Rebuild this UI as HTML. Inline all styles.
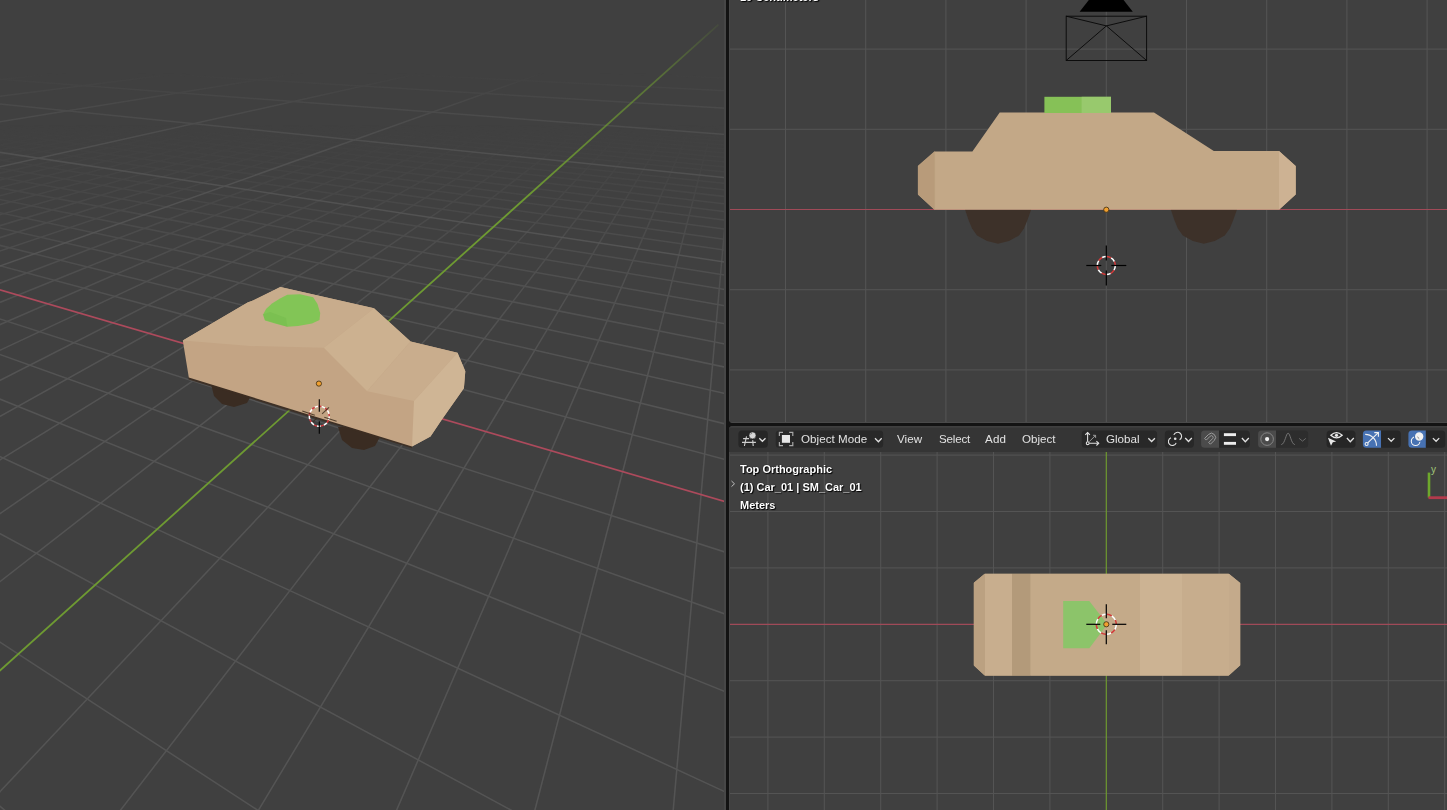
<!DOCTYPE html>
<html><head><meta charset="utf-8"><style>
html,body{margin:0;padding:0;}
body{width:1447px;height:810px;overflow:hidden;position:relative;background:#131313;font-family:"Liberation Sans",sans-serif;}
.pane{position:absolute;overflow:hidden;}
.txt{position:absolute;will-change:transform;color:#e2e2e2;font-size:11.6px;line-height:14px;white-space:nowrap;}
.ov{position:absolute;will-change:transform;color:#fff;font-weight:bold;font-size:11px;line-height:12px;white-space:nowrap;text-shadow:0 0 1px #000,1px 1px 1px #000;}
</style></head><body>
<div class="pane" style="left:0;top:0;width:726px;height:810px;"><svg width="726" height="810" style="position:absolute;left:0;top:0">
<defs>
 <linearGradient id="fade1" x1="0" y1="0" x2="0" y2="810" gradientUnits="userSpaceOnUse">
  <stop offset="0.154" stop-color="#fff" stop-opacity="0"/>
  <stop offset="0.198" stop-color="#fff" stop-opacity="0.14"/>
  <stop offset="0.235" stop-color="#fff" stop-opacity="0.33"/>
  <stop offset="0.284" stop-color="#fff" stop-opacity="0.58"/>
  <stop offset="0.358" stop-color="#fff" stop-opacity="0.82"/>
  <stop offset="0.47" stop-color="#fff" stop-opacity="1"/>
 </linearGradient>
 <linearGradient id="fade10" x1="0" y1="0" x2="0" y2="810" gradientUnits="userSpaceOnUse">
  <stop offset="0.09" stop-color="#fff" stop-opacity="0"/>
  <stop offset="0.13" stop-color="#fff" stop-opacity="0.45"/>
  <stop offset="0.19" stop-color="#fff" stop-opacity="0.75"/>
  <stop offset="0.3" stop-color="#fff" stop-opacity="0.9"/>
  <stop offset="0.45" stop-color="#fff" stop-opacity="1"/>
 </linearGradient>
 <linearGradient id="fadeax" x1="0" y1="0" x2="0" y2="810" gradientUnits="userSpaceOnUse">
  <stop offset="0.02" stop-color="#fff" stop-opacity="0.05"/>
  <stop offset="0.06" stop-color="#fff" stop-opacity="0.3"/>
  <stop offset="0.10" stop-color="#fff" stop-opacity="0.55"/>
  <stop offset="0.25" stop-color="#fff" stop-opacity="1"/>
 </linearGradient>
 <mask id="max" maskUnits="userSpaceOnUse" x="0" y="0" width="726" height="810"><rect width="726" height="810" fill="url(#fadeax)"/></mask>
 <mask id="m1" maskUnits="userSpaceOnUse" x="0" y="0" width="726" height="810"><rect width="726" height="810" fill="url(#fade1)"/></mask>
 <mask id="m10" maskUnits="userSpaceOnUse" x="0" y="0" width="726" height="810"><rect width="726" height="810" fill="url(#fade10)"/></mask>
</defs>
<rect width="726" height="810" fill="#404040"/>
<g stroke="#545454" stroke-width="1.5" mask="url(#m1)"><line x1="-32098.1" y1="2609.2" x2="161.8" y2="47.3"/><line x1="-31663.1" y1="2608.3" x2="166.9" y2="47.5"/><line x1="-31228.2" y1="2607.5" x2="172.1" y2="47.7"/><line x1="-30793.3" y1="2606.6" x2="177.3" y2="47.9"/><line x1="-30358.4" y1="2605.7" x2="182.6" y2="48.1"/><line x1="-29923.5" y1="2604.8" x2="187.9" y2="48.3"/><line x1="-29488.6" y1="2604.0" x2="193.3" y2="48.5"/><line x1="-29053.7" y1="2603.1" x2="198.7" y2="48.7"/><line x1="-28618.8" y1="2602.2" x2="204.2" y2="48.9"/><line x1="-27749.0" y1="2600.5" x2="215.2" y2="49.3"/><line x1="-27314.1" y1="2599.6" x2="220.9" y2="49.5"/><line x1="-26879.2" y1="2598.7" x2="226.5" y2="49.7"/><line x1="-26444.3" y1="2597.8" x2="232.3" y2="50.0"/><line x1="-26009.3" y1="2597.0" x2="238.1" y2="50.2"/><line x1="-25574.4" y1="2596.1" x2="243.9" y2="50.4"/><line x1="-25139.5" y1="2595.2" x2="249.8" y2="50.6"/><line x1="-24704.6" y1="2594.4" x2="255.8" y2="50.8"/><line x1="-24269.7" y1="2593.5" x2="261.8" y2="51.1"/><line x1="-23399.9" y1="2591.7" x2="274.0" y2="51.5"/><line x1="-22965.0" y1="2590.9" x2="280.2" y2="51.8"/><line x1="-22530.1" y1="2590.0" x2="286.4" y2="52.0"/><line x1="-22095.2" y1="2589.1" x2="292.7" y2="52.2"/><line x1="-21660.3" y1="2588.2" x2="299.1" y2="52.5"/><line x1="-21225.4" y1="2587.4" x2="305.6" y2="52.7"/><line x1="-20790.5" y1="2586.5" x2="312.1" y2="53.0"/><line x1="-20355.5" y1="2585.6" x2="318.7" y2="53.2"/><line x1="-19920.6" y1="2584.7" x2="325.3" y2="53.5"/><line x1="-19050.8" y1="2583.0" x2="338.8" y2="54.0"/><line x1="-18615.9" y1="2582.1" x2="345.6" y2="54.2"/><line x1="-18181.0" y1="2581.2" x2="352.6" y2="54.5"/><line x1="-17746.1" y1="2580.4" x2="359.6" y2="54.7"/><line x1="-17311.2" y1="2579.5" x2="366.6" y2="55.0"/><line x1="-16876.3" y1="2578.6" x2="373.8" y2="55.3"/><line x1="-16441.4" y1="2577.8" x2="381.0" y2="55.5"/><line x1="-16006.5" y1="2576.9" x2="388.3" y2="55.8"/><line x1="-15571.6" y1="2576.0" x2="395.7" y2="56.1"/><line x1="-14701.7" y1="2574.3" x2="410.7" y2="56.7"/><line x1="-14266.8" y1="2573.4" x2="418.3" y2="56.9"/><line x1="-13831.9" y1="2572.5" x2="426.0" y2="57.2"/><line x1="-13397.0" y1="2571.6" x2="433.8" y2="57.5"/><line x1="-12962.1" y1="2570.8" x2="441.7" y2="57.8"/><line x1="-12527.2" y1="2569.9" x2="449.6" y2="58.1"/><line x1="-12092.3" y1="2569.0" x2="457.7" y2="58.4"/><line x1="-11657.4" y1="2568.1" x2="465.9" y2="58.7"/><line x1="-11222.5" y1="2567.3" x2="474.1" y2="59.0"/><line x1="-10352.7" y1="2565.5" x2="490.9" y2="59.7"/><line x1="-9917.8" y1="2564.7" x2="499.4" y2="60.0"/><line x1="-9482.9" y1="2563.8" x2="508.0" y2="60.3"/><line x1="-9047.9" y1="2562.9" x2="516.8" y2="60.6"/><line x1="-8613.0" y1="2562.0" x2="525.6" y2="61.0"/><line x1="-8178.1" y1="2561.2" x2="534.5" y2="61.3"/><line x1="-7743.2" y1="2560.3" x2="543.6" y2="61.7"/><line x1="-7308.3" y1="2559.4" x2="552.7" y2="62.0"/><line x1="-6873.4" y1="2558.5" x2="562.0" y2="62.3"/><line x1="-6003.6" y1="2556.8" x2="580.9" y2="63.1"/><line x1="-903.7" y1="130.3" x2="527.7" y2="2543.7"/><line x1="-5568.7" y1="2555.9" x2="590.5" y2="63.4"/><line x1="-866.9" y1="127.4" x2="1321.7" y2="2542.1"/><line x1="-5133.8" y1="2555.0" x2="600.2" y2="63.8"/><line x1="-831.7" y1="124.6" x2="2115.8" y2="2540.5"/><line x1="-4698.9" y1="2554.2" x2="610.1" y2="64.1"/><line x1="-798.1" y1="122.0" x2="2909.9" y2="2538.9"/><line x1="-4264.0" y1="2553.3" x2="620.0" y2="64.5"/><line x1="-765.8" y1="119.4" x2="3703.9" y2="2537.3"/><line x1="-3829.1" y1="2552.4" x2="630.2" y2="64.9"/><line x1="-734.8" y1="117.0" x2="4498.0" y2="2535.7"/><line x1="-3394.1" y1="2551.5" x2="640.4" y2="65.3"/><line x1="-705.1" y1="114.7" x2="5292.0" y2="2534.1"/><line x1="-2959.2" y1="2550.7" x2="650.7" y2="65.7"/><line x1="-676.6" y1="112.4" x2="6086.1" y2="2532.5"/><line x1="-2524.3" y1="2549.8" x2="661.2" y2="66.1"/><line x1="-649.2" y1="110.3" x2="6880.2" y2="2530.9"/><line x1="-1654.5" y1="2548.1" x2="682.6" y2="66.9"/><line x1="-597.4" y1="106.2" x2="8468.3" y2="2527.7"/><line x1="-1219.6" y1="2547.2" x2="693.6" y2="67.3"/><line x1="-572.9" y1="104.3" x2="9262.3" y2="2526.1"/><line x1="-784.7" y1="2546.3" x2="704.6" y2="67.7"/><line x1="-549.3" y1="102.5" x2="10056.4" y2="2524.5"/><line x1="-349.8" y1="2545.4" x2="715.8" y2="68.1"/><line x1="-526.5" y1="100.7" x2="10850.5" y2="2522.9"/><line x1="85.1" y1="2544.6" x2="727.2" y2="68.5"/><line x1="-504.5" y1="99.0" x2="11644.5" y2="2521.3"/><line x1="520.0" y1="2543.7" x2="738.7" y2="69.0"/><line x1="-483.2" y1="97.3" x2="12438.6" y2="2519.7"/><line x1="-462.7" y1="95.7" x2="13232.6" y2="2518.2"/><line x1="-442.9" y1="94.1" x2="14026.7" y2="2516.6"/><line x1="-423.6" y1="92.6" x2="14820.8" y2="2515.0"/><line x1="-387.0" y1="89.7" x2="16408.9" y2="2511.8"/><line x1="-369.6" y1="88.4" x2="17202.9" y2="2510.2"/><line x1="-352.6" y1="87.0" x2="17997.0" y2="2508.6"/><line x1="-336.2" y1="85.8" x2="18791.1" y2="2507.0"/><line x1="-320.3" y1="84.5" x2="19585.1" y2="2505.4"/><line x1="-304.8" y1="83.3" x2="20379.2" y2="2503.8"/><line x1="-289.7" y1="82.1" x2="21173.3" y2="2502.2"/><line x1="-275.1" y1="81.0" x2="21967.3" y2="2500.6"/><line x1="-260.9" y1="79.9" x2="22761.4" y2="2499.0"/><line x1="-233.7" y1="77.7" x2="24349.5" y2="2495.8"/><line x1="-220.6" y1="76.7" x2="25143.6" y2="2494.2"/><line x1="-207.9" y1="75.7" x2="25937.6" y2="2492.6"/><line x1="-195.5" y1="74.7" x2="26731.7" y2="2491.0"/><line x1="-183.4" y1="73.8" x2="27525.7" y2="2489.4"/><line x1="-171.6" y1="72.9" x2="28319.8" y2="2487.9"/><line x1="-160.1" y1="72.0" x2="19905.5" y2="1726.8"/><line x1="-148.9" y1="71.1" x2="15262.3" y2="1308.6"/><line x1="-138.0" y1="70.2" x2="12430.4" y2="1053.5"/><line x1="-116.9" y1="68.6" x2="9151.0" y2="758.2"/><line x1="-106.8" y1="67.8" x2="8116.6" y2="665.0"/><line x1="-96.9" y1="67.0" x2="7308.8" y2="592.2"/><line x1="-87.2" y1="66.2" x2="6660.6" y2="533.9"/><line x1="-77.7" y1="65.5" x2="6128.9" y2="486.0"/><line x1="-68.4" y1="64.8" x2="5684.9" y2="446.0"/><line x1="-59.4" y1="64.1" x2="5308.6" y2="412.1"/><line x1="-50.5" y1="63.4" x2="4985.5" y2="383.0"/><line x1="-41.9" y1="62.7" x2="4705.1" y2="357.7"/><line x1="-25.1" y1="61.4" x2="4242.7" y2="316.1"/><line x1="-17.0" y1="60.7" x2="4049.7" y2="298.7"/><line x1="-9.0" y1="60.1" x2="3876.9" y2="283.1"/><line x1="-1.2" y1="59.5" x2="3721.3" y2="269.1"/><line x1="6.4" y1="58.9" x2="3580.4" y2="256.4"/><line x1="13.9" y1="58.3" x2="3452.2" y2="244.9"/><line x1="21.2" y1="57.7" x2="3335.1" y2="234.3"/><line x1="28.4" y1="57.2" x2="3227.8" y2="224.7"/><line x1="35.4" y1="56.6" x2="3128.9" y2="215.8"/><line x1="49.1" y1="55.6" x2="2953.2" y2="199.9"/><line x1="55.7" y1="55.0" x2="2874.6" y2="192.9"/><line x1="62.2" y1="54.5" x2="2801.5" y2="186.3"/><line x1="68.6" y1="54.0" x2="2733.2" y2="180.1"/><line x1="74.9" y1="53.5" x2="2669.3" y2="174.4"/><line x1="81.0" y1="53.0" x2="2609.4" y2="169.0"/><line x1="87.1" y1="52.6" x2="2553.1" y2="163.9"/><line x1="93.0" y1="52.1" x2="2500.2" y2="159.1"/><line x1="98.8" y1="51.7" x2="2450.2" y2="154.6"/><line x1="110.2" y1="50.8" x2="2358.3" y2="146.4"/><line x1="115.7" y1="50.3" x2="2316.0" y2="142.5"/><line x1="121.1" y1="49.9" x2="2275.8" y2="138.9"/><line x1="126.5" y1="49.5" x2="2237.7" y2="135.5"/><line x1="131.7" y1="49.1" x2="2201.4" y2="132.2"/><line x1="136.9" y1="48.7" x2="2166.8" y2="129.1"/><line x1="142.0" y1="48.3" x2="2133.8" y2="126.1"/><line x1="147.0" y1="47.9" x2="2102.3" y2="123.3"/><line x1="151.9" y1="47.5" x2="2072.2" y2="120.6"/></g>
<g stroke="#565656" stroke-width="1.5" mask="url(#m10)"><line x1="-176052.5" y1="2898.3" x2="139.2" y2="10.9"/><line x1="-171703.4" y1="2889.6" x2="148.9" y2="11.0"/><line x1="-167354.4" y1="2880.9" x2="158.8" y2="11.1"/><line x1="-163005.3" y1="2872.1" x2="168.9" y2="11.1"/><line x1="-158656.2" y1="2863.4" x2="179.2" y2="11.2"/><line x1="-154307.1" y1="2854.7" x2="189.6" y2="11.2"/><line x1="-149958.1" y1="2845.9" x2="200.3" y2="11.3"/><line x1="-145609.0" y1="2837.2" x2="211.1" y2="11.4"/><line x1="-141259.9" y1="2828.5" x2="222.2" y2="11.4"/><line x1="-136910.8" y1="2819.7" x2="233.4" y2="11.5"/><line x1="-132561.7" y1="2811.0" x2="244.9" y2="11.6"/><line x1="-128212.7" y1="2802.2" x2="256.6" y2="11.6"/><line x1="-123863.6" y1="2793.5" x2="268.5" y2="11.7"/><line x1="-119514.5" y1="2784.8" x2="280.6" y2="11.8"/><line x1="-115165.4" y1="2776.0" x2="293.0" y2="11.8"/><line x1="-110816.4" y1="2767.3" x2="305.7" y2="11.9"/><line x1="-106467.3" y1="2758.6" x2="318.5" y2="12.0"/><line x1="-102118.2" y1="2749.8" x2="331.7" y2="12.1"/><line x1="-97769.1" y1="2741.1" x2="345.1" y2="12.1"/><line x1="-93420.1" y1="2732.4" x2="358.8" y2="12.2"/><line x1="-89071.0" y1="2723.6" x2="372.8" y2="12.3"/><line x1="-84721.9" y1="2714.9" x2="387.0" y2="12.4"/><line x1="-80372.8" y1="2706.2" x2="401.6" y2="12.5"/><line x1="-76023.7" y1="2697.4" x2="416.5" y2="12.5"/><line x1="-71674.7" y1="2688.7" x2="431.7" y2="12.6"/><line x1="-67325.6" y1="2680.0" x2="447.3" y2="12.7"/><line x1="-62976.5" y1="2671.2" x2="463.2" y2="12.8"/><line x1="-58627.4" y1="2662.5" x2="479.4" y2="12.9"/><line x1="-54278.4" y1="2653.8" x2="496.0" y2="13.0"/><line x1="-49929.3" y1="2645.0" x2="513.1" y2="13.1"/><line x1="-45580.2" y1="2636.3" x2="530.5" y2="13.2"/><line x1="-41231.1" y1="2627.5" x2="548.3" y2="13.3"/><line x1="-36882.0" y1="2618.8" x2="566.5" y2="13.4"/><line x1="-32533.0" y1="2610.1" x2="585.2" y2="13.5"/><line x1="-28183.9" y1="2601.3" x2="604.4" y2="13.6"/><line x1="-23834.8" y1="2592.6" x2="624.0" y2="13.7"/><line x1="-19485.7" y1="2583.9" x2="644.1" y2="13.9"/><line x1="-15136.7" y1="2575.1" x2="664.7" y2="14.0"/><line x1="-10787.6" y1="2566.4" x2="685.9" y2="14.1"/><line x1="-6438.5" y1="2557.7" x2="707.6" y2="14.2"/><line x1="-830.5" y1="26.8" x2="15614.8" y2="2513.4"/><line x1="-768.4" y1="25.8" x2="23555.4" y2="2497.4"/><line x1="-711.0" y1="24.9" x2="31496.0" y2="2481.5"/><line x1="-657.7" y1="24.0" x2="39436.6" y2="2465.5"/><line x1="-608.3" y1="23.2" x2="47377.2" y2="2449.6"/><line x1="-562.2" y1="22.4" x2="55317.8" y2="2433.6"/><line x1="-519.1" y1="21.7" x2="63258.4" y2="2417.7"/><line x1="-478.8" y1="21.1" x2="71199.0" y2="2401.7"/><line x1="-441.0" y1="20.4" x2="79139.6" y2="2385.8"/><line x1="-405.5" y1="19.9" x2="87080.2" y2="2369.8"/><line x1="-372.0" y1="19.3" x2="95020.8" y2="2353.9"/><line x1="-340.4" y1="18.8" x2="102961.4" y2="2337.9"/><line x1="-310.6" y1="18.3" x2="110902.1" y2="2322.0"/><line x1="-282.3" y1="17.8" x2="118842.7" y2="2306.0"/><line x1="-255.5" y1="17.4" x2="126783.3" y2="2290.1"/><line x1="-230.1" y1="17.0" x2="134723.9" y2="2274.1"/><line x1="-206.0" y1="16.6" x2="142664.5" y2="2258.2"/><line x1="-183.0" y1="16.2" x2="150605.1" y2="2242.2"/><line x1="-161.1" y1="15.9" x2="158545.7" y2="2226.3"/><line x1="-140.2" y1="15.5" x2="166486.3" y2="2210.3"/><line x1="-120.2" y1="15.2" x2="69697.5" y2="886.9"/><line x1="-101.2" y1="14.9" x2="24879.9" y2="311.1"/><line x1="-82.9" y1="14.6" x2="15372.3" y2="188.9"/><line x1="-65.4" y1="14.3" x2="11238.5" y2="135.8"/><line x1="-48.7" y1="14.0" x2="8926.3" y2="106.1"/><line x1="-32.6" y1="13.8" x2="7449.1" y2="87.1"/><line x1="-17.2" y1="13.5" x2="6423.7" y2="74.0"/><line x1="-2.3" y1="13.3" x2="5670.4" y2="64.3"/><line x1="11.9" y1="13.0" x2="5093.5" y2="56.9"/><line x1="25.7" y1="12.8" x2="4637.6" y2="51.0"/><line x1="38.9" y1="12.6" x2="4268.2" y2="46.3"/><line x1="51.6" y1="12.4" x2="3962.8" y2="42.4"/><line x1="63.9" y1="12.2" x2="3706.2" y2="39.1"/><line x1="75.8" y1="12.0" x2="3487.4" y2="36.3"/><line x1="87.3" y1="11.8" x2="3298.8" y2="33.8"/><line x1="98.3" y1="11.6" x2="3134.4" y2="31.7"/><line x1="109.1" y1="11.4" x2="2989.9" y2="29.9"/><line x1="119.4" y1="11.3" x2="2861.9" y2="28.2"/><line x1="129.4" y1="11.1" x2="2747.7" y2="26.7"/><line x1="139.2" y1="10.9" x2="2645.2" y2="25.4"/></g>
<g mask="url(#max)">
<line x1="-897.9" y1="27.9" x2="7674.2" y2="2529.3" stroke="#ad4a5c" stroke-width="1.7"/>
<line x1="-2089.4" y1="2548.9" x2="718.4" y2="24.6" stroke="#6e9a32" stroke-width="1.8"/>
</g>

<polygon points="211,384 214,396 222,404 234,407 247,403 252,394 250,384" fill="#3a2c22"/>
<polygon points="338,427 342,440 352,448 364,450 375,446 380,437 378,427" fill="#3a2c22"/>
<polygon points="188.5,376.5 412,445.5 412,448.3 188.5,379.6" fill="#3d2e22" opacity="0.85"/>
<polygon points="182.8,340.5 188.8,377.6 412,446.6 430.5,436.6 441.9,419.6 463.9,388.3 465.3,371.3 457.5,352.8 410.6,341.4 374,308.3 280.4,286.9 253,300.5 247.6,302.5" fill="#c3a484"/>
<polygon points="182.8,340.5 247.6,302.5 253,300.5 280.4,286.9 374,308.3 323.8,347.7 250,346" fill="#c8ac8c"/>
<polygon points="323.8,347.7 374,308.3 410.6,341.4 367.2,391.2" fill="#ccb190"/>
<polygon points="367.2,391.2 410.6,341.4 457.5,352.8 414,401" fill="#c9ad8d"/>
<polygon points="414,401 457.5,352.8 465.3,371.3 463.9,388.3 441.9,419.6 430.5,436.6 412,446.6" fill="#cfb595"/>
<polygon points="263.1,314.6 266,309 272,303.5 280,298.5 287.3,294.7 300,294.3 313.2,297.3 317.5,304 320.2,313 319.5,320 312,323.5 298,326 287.3,326.7 275,323.5 265,320.5" fill="#82c556"/>
<polygon points="263.1,314.6 264.9,319.7 287.3,326.7 286,318 270,312" fill="#74bc4c" opacity="0.5"/>
<circle cx="318.9" cy="383.6" r="2.6" fill="#f0a030" stroke="#3a2a10" stroke-width="0.8"/>
<g transform="translate(319.3,416.2)">
 <circle r="10" fill="none" stroke="#fff" stroke-width="1.5" stroke-dasharray="4 3"/>
 <circle r="10" fill="none" stroke="#d03a40" stroke-width="1.5" stroke-dasharray="3 4" stroke-dashoffset="-4"/>
 <g stroke="#000" stroke-width="1.1">
 <line x1="0" y1="-17" x2="0" y2="-4.5"/><line x1="0" y1="5" x2="0" y2="17.6"/>
 </g>
 <g stroke="#3a2a1a" stroke-width="1.1" opacity="0.8">
 <line x1="-17" y1="-5.2" x2="-4.5" y2="-0.9"/><line x1="5" y1="1.1" x2="17.3" y2="5.1"/>
 <line x1="2.8" y1="-2.3" x2="9.7" y2="-8.8"/><line x1="-6.3" y1="5.6" x2="-2.8" y2="2.2"/>
 </g>
</g>

<rect x="724" y="0" width="2" height="810" fill="#474747"/>
</svg></div>
<div class="pane" style="left:729px;top:0;width:718px;height:423px;border-bottom-left-radius:4px;"><svg width="718" height="423" style="position:absolute;left:0;top:0">
<rect width="718" height="423" fill="#404040"/>
<g stroke="#545454" stroke-width="1"><line x1="56.5" y1="0" x2="56.5" y2="423"/><line x1="136.7" y1="0" x2="136.7" y2="423"/><line x1="216.9" y1="0" x2="216.9" y2="423"/><line x1="0" y1="49.1" x2="718" y2="49.1"/><line x1="297.1" y1="0" x2="297.1" y2="423"/><line x1="0" y1="129.3" x2="718" y2="129.3"/><line x1="377.3" y1="0" x2="377.3" y2="423"/><line x1="457.5" y1="0" x2="457.5" y2="423"/><line x1="0" y1="289.7" x2="718" y2="289.7"/><line x1="537.7" y1="0" x2="537.7" y2="423"/><line x1="0" y1="369.9" x2="718" y2="369.9"/><line x1="617.9" y1="0" x2="617.9" y2="423"/><line x1="698.1" y1="0" x2="698.1" y2="423"/></g>
<line x1="0" y1="209.5" x2="718" y2="209.5" stroke="#a04a58" stroke-width="1.2"/>
<polygon points="236.0,209.5 239.5,220.0 243.0,228.5 248.0,235.5 258.0,241.0 269.0,243.8 280.0,241.0 290.0,235.5 295.0,228.5 298.5,220.0 302.2,209.5" fill="#3d3129"/>
<polygon points="441.8,209.5 445.3,220.0 448.8,228.5 453.8,235.5 463.8,241.0 474.8,243.8 485.8,241.0 495.8,235.5 500.8,228.5 504.3,220.0 508.0,209.5" fill="#3d3129"/>
<polygon points="205.6,151.4 243.4,151.4 270.7,112.5 425.0,112.5 484.8,151.0 550.0,151.0 566.7,166.0 566.7,194.4 550.0,209.7 205.6,209.7 189.0,194.4 189.0,166.0" fill="#c3a887"/>
<polygon points="205.6,151.4 189.0,166.0 189.0,194.4 205.6,209.7" fill="#b89b7a" stroke="#b89b7a" stroke-width="0.3"/>
<polygon points="550.0,151.0 566.7,166.0 566.7,194.4 550.0,209.7" fill="#cdb293"/>
<rect x="315.4" y="96.8" width="66.6" height="16.2" fill="#86c157"/>
<rect x="352.6" y="96.8" width="29.4" height="16.2" fill="#98c96d"/>
<circle cx="377.3" cy="209.7" r="2.6" fill="#f0a030" stroke="#3a2a10" stroke-width="0.8"/>
<polygon points="350.6,11.7 403.8,11.7 377.2,-22.0" fill="#000"/>
<g stroke="#0a0a0a" stroke-width="0.95" fill="none">
<rect x="337.2" y="16.2" width="80.4" height="44.3"/>
<polyline points="337.2,16.2 377.4,25.9 417.6,16.2"/>
<polyline points="337.2,60.5 377.4,25.9 417.6,60.5"/>
</g>
<g transform="translate(377.3,265.5)">
 <circle r="9" fill="none" stroke="#fff" stroke-width="1.5" stroke-dasharray="4.95 4.50"/>
 <circle r="9" fill="none" stroke="#d43a3a" stroke-width="1.5" stroke-dasharray="4.50 4.95" stroke-dashoffset="-4.95"/>
 <g stroke="#000" stroke-width="1.2">
 <line x1="0" y1="-20" x2="0" y2="-5"/><line x1="0" y1="5" x2="0" y2="20"/>
 <line x1="-20" y1="0" x2="-5" y2="0"/><line x1="5" y1="0" x2="20" y2="0"/></g>
</g>

<rect x="0" y="0" width="1" height="423" fill="#484848"/>
<rect x="0" y="422" width="718" height="1" fill="#4a4a4a"/>
</svg><div class="ov" style="left:10.9px;top:-9.0px">10 Centimeters</div></div>
<div class="pane" style="left:729px;top:426px;width:718px;height:384px;border-top-left-radius:4px;"><svg width="718" height="384" style="position:absolute;left:0;top:0">
<defs><clipPath id="carclip"><polygon points="256.0,147.6 499.5,147.6 511.2,157.0 511.2,239.2 499.5,249.8 256.0,249.8 244.6,239.2 244.6,157.0"/></clipPath></defs>
<rect width="718" height="384" fill="#404040"/>
<g stroke="#545454" stroke-width="1"><line x1="38.9" y1="0" x2="38.9" y2="384"/><line x1="95.3" y1="0" x2="95.3" y2="384"/><line x1="151.7" y1="0" x2="151.7" y2="384"/><line x1="208.1" y1="0" x2="208.1" y2="384"/><line x1="0" y1="29.1" x2="718" y2="29.1"/><line x1="264.5" y1="0" x2="264.5" y2="384"/><line x1="0" y1="85.5" x2="718" y2="85.5"/><line x1="320.9" y1="0" x2="320.9" y2="384"/><line x1="0" y1="141.9" x2="718" y2="141.9"/><line x1="433.7" y1="0" x2="433.7" y2="384"/><line x1="0" y1="254.7" x2="718" y2="254.7"/><line x1="490.1" y1="0" x2="490.1" y2="384"/><line x1="0" y1="311.1" x2="718" y2="311.1"/><line x1="546.5" y1="0" x2="546.5" y2="384"/><line x1="0" y1="367.5" x2="718" y2="367.5"/><line x1="602.9" y1="0" x2="602.9" y2="384"/><line x1="659.3" y1="0" x2="659.3" y2="384"/><line x1="715.7" y1="0" x2="715.7" y2="384"/></g>
<line x1="0" y1="198.3" x2="718" y2="198.3" stroke="#a04a58" stroke-width="1.2"/>
<line x1="377.3" y1="0" x2="377.3" y2="384" stroke="#6f9a30" stroke-width="1.2"/>
<g clip-path="url(#carclip)">
<rect x="244.6" y="147.6" width="267.4" height="102.2" fill="#c4aa89"/>
<rect x="244.6" y="147.6" width="11.4" height="102.2" fill="#bba181"/>
<rect x="256.0" y="147.6" width="27.0" height="102.2" fill="#c8ae8e"/>
<rect x="283.0" y="147.6" width="18.6" height="102.2" fill="#b39a7a"/>
<rect x="301.6" y="147.6" width="109.4" height="102.2" fill="#c4aa89"/>
<rect x="411.0" y="147.6" width="42.0" height="102.2" fill="#ccb393"/>
<rect x="453.0" y="147.6" width="47.0" height="102.2" fill="#c7ad8d"/>
<rect x="500.0" y="147.6" width="12.0" height="102.2" fill="#c4aa8b"/>
</g>
<polygon points="334.2,175.1 360.3,175.1 378.3,198.3 360.3,222.2 334.2,222.2" fill="#8cc46a"/>
<g transform="translate(377.3,198.3)">
 <circle r="10" fill="none" stroke="#fff" stroke-width="1.5" stroke-dasharray="5.50 5.00"/>
 <circle r="10" fill="none" stroke="#d43a3a" stroke-width="1.5" stroke-dasharray="5.00 5.50" stroke-dashoffset="-5.50"/>
 <g stroke="#000" stroke-width="1.2">
 <line x1="0" y1="-20" x2="0" y2="-6"/><line x1="0" y1="6" x2="0" y2="20"/>
 <line x1="-20" y1="0" x2="-6" y2="0"/><line x1="6" y1="0" x2="20" y2="0"/></g>
</g>
<circle cx="377.3" cy="198.3" r="2.6" fill="#f0a030" stroke="#3a2a10" stroke-width="0.8"/>
<rect x="698.7" y="46.6" width="2.6" height="25" fill="#6ea82c"/>
<rect x="699.5" y="70.3" width="20" height="2.8" fill="#b33a4c"/>
<text x="702.0" y="47.0" font-family="Liberation Sans" font-size="10" fill="#a2c87a">y</text>
<rect x="0" y="0" width="1" height="384" fill="#484848"/>
</svg>
<svg width="718" height="26" style="position:absolute;left:0;top:0">
<rect width="718" height="26" fill="#353535"/>
<rect width="718" height="1.6" fill="#3f3f3f"/>
<path d="M12.9,4.4 H35.3 Q38.8,4.4 38.8,7.9 V18.2 Q38.8,21.7 35.3,21.7 H12.9 Q9.4,21.7 9.4,18.2 V7.9 Q9.4,4.4 12.9,4.4 Z" fill="#262626"/>
<path d="M50.2,4.4 H150.7 Q154.2,4.4 154.2,7.9 V18.2 Q154.2,21.7 150.7,21.7 H50.2 Q46.7,21.7 46.7,18.2 V7.9 Q46.7,4.4 50.2,4.4 Z" fill="#282828"/>
<path d="M356.2,4.4 H424.6 Q428.1,4.4 428.1,7.9 V18.2 Q428.1,21.7 424.6,21.7 H356.2 Q352.7,21.7 352.7,18.2 V7.9 Q352.7,4.4 356.2,4.4 Z" fill="#282828"/>
<path d="M439.3,4.4 H461.4 Q464.9,4.4 464.9,7.9 V18.2 Q464.9,21.7 461.4,21.7 H439.3 Q435.8,21.7 435.8,18.2 V7.9 Q435.8,4.4 439.3,4.4 Z" fill="#282828"/>
<path d="M475.6,4.4 H490.1 Q490.1,4.4 490.1,4.4 V21.7 Q490.1,21.7 490.1,21.7 H475.6 Q472.1,21.7 472.1,18.2 V7.9 Q472.1,4.4 475.6,4.4 Z" fill="#4b4b4b"/>
<path d="M490.1,4.4 H517.3 Q520.8,4.4 520.8,7.9 V18.2 Q520.8,21.7 517.3,21.7 H490.1 Q490.1,21.7 490.1,21.7 V4.4 Q490.1,4.4 490.1,4.4 Z" fill="#282828"/>
<path d="M532.6,4.4 H547.1 Q547.1,4.4 547.1,4.4 V21.7 Q547.1,21.7 547.1,21.7 H532.6 Q529.1,21.7 529.1,18.2 V7.9 Q529.1,4.4 532.6,4.4 Z" fill="#4b4b4b"/>
<path d="M547.1,4.4 H575.7 Q579.2,4.4 579.2,7.9 V18.2 Q579.2,21.7 575.7,21.7 H547.1 Q547.1,21.7 547.1,21.7 V4.4 Q547.1,4.4 547.1,4.4 Z" fill="#2d2d2d"/>
<path d="M601.1,4.4 H623.0 Q626.5,4.4 626.5,7.9 V18.2 Q626.5,21.7 623.0,21.7 H601.1 Q597.6,21.7 597.6,18.2 V7.9 Q597.6,4.4 601.1,4.4 Z" fill="#262626"/>
<path d="M637.4,4.4 H652.1 Q652.1,4.4 652.1,4.4 V21.7 Q652.1,21.7 652.1,21.7 H637.4 Q633.9,21.7 633.9,18.2 V7.9 Q633.9,4.4 637.4,4.4 Z" fill="#4772b3"/>
<path d="M652.1,4.4 H668.3 Q671.8,4.4 671.8,7.9 V18.2 Q671.8,21.7 668.3,21.7 H652.1 Q652.1,21.7 652.1,21.7 V4.4 Q652.1,4.4 652.1,4.4 Z" fill="#262626"/>
<path d="M682.9,4.4 H696.9 Q696.9,4.4 696.9,4.4 V21.7 Q696.9,21.7 696.9,21.7 H682.9 Q679.4,21.7 679.4,18.2 V7.9 Q679.4,4.4 682.9,4.4 Z" fill="#4772b3"/>
<path d="M696.9,4.4 H712.8 Q716.3,4.4 716.3,7.9 V18.2 Q716.3,21.7 712.8,21.7 H696.9 Q696.9,21.7 696.9,21.7 V4.4 Q696.9,4.4 696.9,4.4 Z" fill="#262626"/>
<!-- editor type icon -->
<g stroke="#d0d0d0" stroke-width="1.1" fill="none">
<line x1="14.1" y1="12.6" x2="20.0" y2="12.6"/>
<line x1="13.0" y1="16.4" x2="26.9" y2="16.4"/>
<line x1="17.5" y1="10.3" x2="15.4" y2="20.0"/>
<line x1="23.7" y1="14.1" x2="24.2" y2="20.0"/>
</g>
<circle cx="23.5" cy="9.4" r="3.5" fill="#d6d6d6" stroke="#262626" stroke-width="0.6"/><path d="M 21.6,8.6 A 2 2 0 0 1 23.2,7.2" stroke="#555" stroke-width="0.6" fill="none"/>
<polyline points="30.3,12.3 33.4,15.3 36.5,12.3" fill="none" stroke="#e0e0e0" stroke-width="1.3"/>
<!-- object mode icon -->
<g stroke="#a8a8a8" stroke-width="1.2" fill="none">
<polyline points="50.4,10.0 50.4,6.4 54.0,6.4"/>
<polyline points="60.2,6.4 63.8,6.4 63.8,10.0"/>
<polyline points="50.4,16.0 50.4,19.6 54.0,19.6"/>
<polyline points="60.2,19.6 63.8,19.6 63.8,16.0"/>
</g>
<rect x="52.9" y="9.0" width="8.1" height="7.8" fill="#e6e6e6"/>
<polyline points="146.0,12.3 149.4,15.8 152.7,12.3" fill="none" stroke="#e0e0e0" stroke-width="1.3"/>
<!-- transform orientation icon -->
<g stroke="#e0e0e0" stroke-width="1.1" fill="none">
<line x1="358.6" y1="15.6" x2="358.6" y2="6.6"/>
<polyline points="356.3,8.8 358.6,6.5 360.9,8.8"/>
<line x1="360.2" y1="17.3" x2="369.6" y2="17.3"/>
<polyline points="367.4,15.1 369.7,17.3 367.4,19.5"/>
<circle cx="358.7" cy="17.2" r="1.4"/>
</g>
<g stroke="#9a9a9a" stroke-width="1" fill="none">
<line x1="360.3" y1="15.6" x2="366.6" y2="9.3"/>
<polyline points="364.0,9.3 366.6,9.3 366.6,11.9"/>
</g>
<polyline points="419.3,12.2 422.6,15.5 425.9,12.2" fill="none" stroke="#e0e0e0" stroke-width="1.3"/>
<!-- pivot icon -->
<g stroke="#e0e0e0" stroke-width="1.1" fill="none"><path d="M 444.84,8.93 A 4.0 4.0 0 1 1 450.60,13.76"/><path d="M 447.16,16.87 A 4.0 4.0 0 1 1 442.03,11.74"/></g>
<circle cx="446.2" cy="12.8" r="1.3" fill="#e0e0e0"/>
<polyline points="456.2,12.0 459.5,15.5 462.8,12.0" fill="none" stroke="#e0e0e0" stroke-width="1.3"/>
<!-- magnet -->
<path transform="translate(482.4,11.4) rotate(45)" d="M -4.1,0 A 4.1 4.1 0 0 1 4.1,0 L 4.1,5.5 L 1.7,5.5 L 1.7,0 A 1.7 1.7 0 0 0 -1.7,0 L -1.7,5.5 L -4.1,5.5 Z" fill="none" stroke="#a0a0a0" stroke-width="0.9"/>
<!-- snap target bars -->
<rect x="494.9" y="7.2" width="12.1" height="2.9" fill="#ececec"/>
<rect x="494.9" y="15.9" width="12.1" height="2.9" fill="#ececec"/>
<polyline points="512.9,12.0 516.3,15.8 519.8,12.0" fill="none" stroke="#e0e0e0" stroke-width="1.3"/>
<!-- proportional -->
<circle cx="538.1" cy="13.1" r="6.3" fill="none" stroke="#8c8c8c" stroke-width="0.9"/>
<circle cx="538.1" cy="13.1" r="2.1" fill="#f0f0f0"/>
<path d="M 552.3,18.6 C 556.0,18.0 557.0,7.2 559.1,7.2 C 561.2,7.2 562.2,18.0 565.8,18.6" fill="none" stroke="#7a7a7a" stroke-width="0.9"/>
<polyline points="570.2,12.4 573.5,15.1 576.8,12.4" fill="none" stroke="#6a6a6a" stroke-width="1"/>
<!-- visibility -->
<path d="M 601.8,9.3 Q 607.5,4.0 613.2,9.3 Q 607.5,14.6 601.8,9.3 Z" fill="none" stroke="#e8e8e8" stroke-width="1.2"/>
<circle cx="607.5" cy="9.3" r="1.6" fill="#e8e8e8"/>
<path d="M 598.9,11.8 L 607.2,15.6 L 603.8,16.3 L 602.0,19.8 Z" fill="#e8e8e8"/>
<polyline points="617.9,12.0 621.3,15.8 624.8,12.0" fill="none" stroke="#e0e0e0" stroke-width="1.3"/>
<!-- gizmo icon -->
<g stroke="#f2f2f2" stroke-width="1.1" fill="none">
<path d="M 636.2,8.4 A 11.3 11.3 0 0 1 647.5,19.7"/>
<line x1="638.7" y1="16.8" x2="649.3" y2="6.6"/>
<polyline points="645.3,6.6 649.4,6.6 649.4,10.7"/>
<circle cx="637.6" cy="18.0" r="1.5"/>
</g>
<polyline points="659.0,12.1 662.2,15.3 665.4,12.1" fill="none" stroke="#e0e0e0" stroke-width="1.3"/>
<!-- overlay icon -->
<circle cx="686.6" cy="15.2" r="4.3" fill="none" stroke="#f2f2f2" stroke-width="1.1"/>
<circle cx="690.2" cy="10.5" r="4.8" fill="#f2f2f2" stroke="#4772b3" stroke-width="1.2"/>
<line x1="688.4" y1="10.9" x2="690.2" y2="12.6" stroke="#5a5a5a" stroke-width="0.8"/>
<polyline points="703.9,12.1 707.1,15.3 710.2,12.1" fill="none" stroke="#e0e0e0" stroke-width="1.3"/>
</svg>
<div class="txt" style="left:71.5px;top:6.1px;letter-spacing:0.05px">Object Mode</div><div class="txt" style="left:168.2px;top:6.1px;letter-spacing:0.1px">View</div><div class="txt" style="left:209.5px;top:6.1px;letter-spacing:-0.18px">Select</div><div class="txt" style="left:256.1px;top:6.1px;letter-spacing:0.15px">Add</div><div class="txt" style="left:293.1px;top:6.1px;letter-spacing:0px">Object</div><div class="txt" style="left:377.3px;top:6.1px;letter-spacing:0px">Global</div>
 <div class="ov" style="left:10.9px;top:37.4px">Top Orthographic</div>
 <div class="ov" style="left:10.9px;top:55.0px">(1) Car_01 | SM_Car_01</div>
 <div class="ov" style="left:10.9px;top:73.1px">Meters</div>
 <svg width="10" height="12" style="position:absolute;left:0;top:54px"><polyline points="2.5,1 5.5,3.8 2.5,6.6" fill="none" stroke="#bdbdbd" stroke-width="1"/></svg>
</div>
</body></html>
